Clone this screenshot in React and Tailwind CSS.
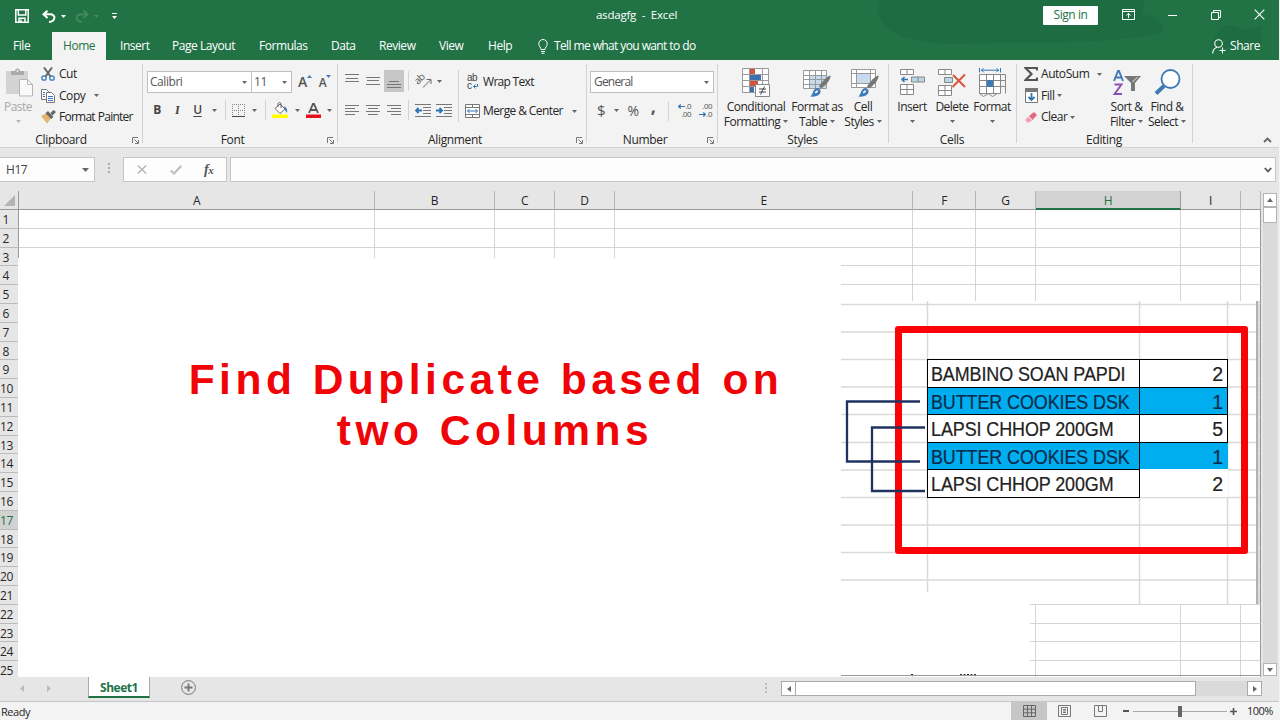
import React from 'react';

const tabs = [
  { name: 'File', cls: 'w-[52px] pl-[13px]' },
  { name: 'Home', cls: 'w-[54px] pl-[11px] bg-[#f3f3f3] text-[#217346]' },
  { name: 'Insert', cls: 'w-[53px] pl-[14px]' },
  { name: 'Page Layout', cls: 'w-[87px] pl-[13px]' },
  { name: 'Formulas', cls: 'w-[72px] pl-[13px]' },
  { name: 'Data', cls: 'w-[48px] pl-[13px]' },
  { name: 'Review', cls: 'w-[60px] pl-[13px]' },
  { name: 'View', cls: 'w-[49px] pl-[13px]' },
  { name: 'Help', cls: 'w-[49px] pl-[13px]' },
];

const columns = [
  { name: 'A', w: 'w-[356px]' },
  { name: 'B', w: 'w-[120px]' },
  { name: 'C', w: 'w-[60px]' },
  { name: 'D', w: 'w-[60px]' },
  { name: 'E', w: 'w-[298px]' },
  { name: 'F', w: 'w-[63px]' },
  { name: 'G', w: 'w-[60px]' },
  { name: 'H', w: 'w-[145px]' },
  { name: 'I', w: 'w-[60px]' },
  { name: '', w: 'w-[20px]' },
];

const rows = Array.from({ length: 25 }, (_, i) => i + 1);

const items = [
  { name: 'BAMBINO SOAN PAPDI', qty: 2 },
  { name: 'BUTTER COOKIES DSK', qty: 1, dup: true },
  { name: 'LAPSI CHHOP 200GM', qty: 5 },
  { name: 'BUTTER COOKIES DSK', qty: 1, dup: true, open: true },
  { name: 'LAPSI CHHOP 200GM', qty: 2, open: true },
];

function Caret({ className = 'text-[#666]' }) {
  return (
    <svg className={`w-[5px] h-[3px] shrink-0 ${className}`} viewBox="0 0 5 3" fill="currentColor">
      <path d="M0 0h5L2.5 3z" />
    </svg>
  );
}

function Slot({ w, className = '', children }) {
  return <div className={`flex shrink-0 items-center justify-center ${w} ${className}`}>{children}</div>;
}

function Sep({ className = 'h-[20px]' }) {
  return <div className={`w-px shrink-0 bg-[#d4d4d4] ${className}`} />;
}

function Launcher() {
  return (
    <svg className="absolute right-[4px] bottom-[4px] w-[7px] h-[7px]" viewBox="0 0 7 7" fill="none" stroke="#777">
      <path d="M.5 6V.5H6M2.5 2.5l3.5 3.5M6.5 3v3.5H3" />
    </svg>
  );
}

function Group({ w, label, launcher, children }) {
  return (
    <div className={`relative flex h-[86px] shrink-0 flex-col ${w}`}>
      <div className="flex h-[69px]">{children}</div>
      <div className="h-[17px] text-center leading-[17px] tracking-[-0.35px]">{label}</div>
      {launcher && <Launcher />}
      <div className="absolute right-0 top-[2px] h-[79px] w-px bg-[#d2d2d2]" />
    </div>
  );
}

function BigButton({ w, icon, top, bottom, dim }) {
  return (
    <div className={`flex shrink-0 flex-col items-center whitespace-nowrap tracking-[-0.5px] ${w} ${dim ? 'text-[#a9a9a9]' : ''}`}>
      <div className="flex h-[35px] items-end justify-center">{icon}</div>
      <div className="mt-[2px] h-[15px] leading-[15px]">{top}</div>
      <div className="flex h-[15px] items-center gap-[3px] leading-[15px]">
        {bottom}
        <Caret className={dim ? 'text-[#b5b5b5]' : 'text-[#666]'} />
      </div>
    </div>
  );
}

function AlignLines({ lines }) {
  return (
    <svg className="w-[14px] h-[14px]" viewBox="0 0 14 14" stroke="#777">
      {lines.map(([x, y, w]) => (
        <path key={y} d={`M${x} ${y}h${w}`} />
      ))}
    </svg>
  );
}

function TitleBar() {
  return (
    <div className="relative flex h-[32px] items-center text-white">
      <div className="flex w-[480px] items-center">
        <svg className="ml-[15px] w-[14px] h-[14px]" viewBox="0 0 14 14" fill="none" stroke="#fff" strokeWidth="1.5">
          <path d="M.8.8h12.4v12.4H.8zM3.3 1v5h7.5V1M4 13V9.2h6V13M6 10.5V13" />
        </svg>
        <svg className="ml-[13px] w-[14px] h-[13px]" viewBox="0 0 14 13" fill="none" stroke="#fff" strokeWidth="2">
          <path d="M5.5.8L1.5 4.3l4 3.6M1.8 4.3h6.4c6 0 5.6 7-1.2 7.8" />
        </svg>
        <Caret className="ml-[5px] text-white" />
        <svg className="ml-[9px] w-[14px] h-[13px]" viewBox="0 0 14 13" fill="none" stroke="#44895f" strokeWidth="1.8">
          <path d="M8.5.8l4 3.5-4 3.6M12.2 4.3H5.8c-6 0-5.6 7 1.2 7.8" />
        </svg>
        <Caret className="ml-[5px] text-[#44895f]" />
        <svg className="ml-[13px] w-[5px] h-[6px]" viewBox="0 0 5 6" fill="#fff">
          <path d="M0 0h5v1H0zM0 3h5L2.5 6z" />
        </svg>
      </div>
      <div className="-mt-[2px] w-[313px] text-center text-[11.5px] tracking-[-0.2px]">asdagfg&nbsp; -&nbsp; Excel</div>
      <div className="ml-[250px] mt-[-2px] h-[19px] w-[55px] rounded-[1px] bg-white text-center leading-[18px] text-[#217346]">Sign in</div>
      <svg className="ml-[24px] mt-[-3px] w-[13px] h-[11px]" viewBox="0 0 13 11" fill="none" stroke="#fff">
        <path d="M.5.5h12v10H.5zM.5 2.5h12M6.5 9V4.5M4.3 6.5l2.2-2.2 2.2 2.2" />
      </svg>
      <div className="ml-[33px] mt-[-2px] h-px w-[9px] bg-white" />
      <svg className="ml-[34px] mt-[-3px] w-[10px] h-[10px]" viewBox="0 0 10 10" fill="none" stroke="#fff">
        <path d="M.5 2.5h7v7h-7zM2.5 2.5v-2h7v7h-2" />
      </svg>
      <svg className="ml-[33px] mt-[-3px] w-[11px] h-[11px]" viewBox="0 0 11 11" stroke="#fff" strokeWidth="1.1">
        <path d="M.7.7l9.6 9.6M10.3.7L.7 10.3" />
      </svg>
    </div>
  );
}

function TabRow() {
  return (
    <div className="relative flex h-[28px] text-white">
      {tabs.map((t) => (
        <div key={t.name} className={`shrink-0 whitespace-nowrap leading-[28px] ${t.cls}`}>{t.name}</div>
      ))}
      <div className="flex w-[688px] items-center pl-[14px]">
        <svg className="w-[10px] h-[15px]" viewBox="0 0 10 15" fill="none" stroke="#fff">
          <path d="M3 10.5C3 8.5.8 7.5.8 4.7a4.2 4.2 0 0 1 8.4 0C9.2 7.5 7 8.5 7 10.5zM3 12.5h4M3.5 14.3h3" />
        </svg>
        <span className="ml-[6px] tracking-[-0.65px] [word-spacing:0.2px]">Tell me what you want to do</span>
      </div>
      <div className="flex items-center">
        <svg className="w-[14px] h-[15px]" viewBox="0 0 14 15" fill="none" stroke="#fff" strokeWidth="1.1">
          <circle cx="6.5" cy="4.5" r="3.8" />
          <path d="M.6 14.5c.3-3.7 2-5.5 4.4-6.3M7.500 11.500h6M10.500 8.500v6" />
        </svg>
        <span className="ml-[4px]">Share</span>
      </div>
    </div>
  );
}

function Clipboard() {
  return (
    <Group w="w-[143px]" label={<span className="mr-[21px]">Clipboard</span>} launcher>
      <BigButton
        w="w-[36px]"
        dim
        top="Paste"
        icon={
          <svg className="ml-[3px] w-[27px] h-[29px]" viewBox="0 0 27 29">
            <path d="M0 3h22v23H0z" fill="#d3d3d3" />
            <path d="M5 7V3h4a2.500 2.500 0 0 1 5 0h4v4z" fill="#aaa" />
            <circle cx="11.500" cy="3" r="1" fill="#eee" />
            <path d="M13.500 11.500h8l5 5v11.500h-13z" fill="#fafafa" stroke="#b5b5b5" />
            <path d="M21.500 11.500v5h5" fill="none" stroke="#b5b5b5" />
          </svg>
        }
      />
      <div className="ml-[5px] mt-[1px] flex flex-col">
        <div className="flex h-[22px] items-center">
          <svg className="w-[14px] h-[14px]" viewBox="0 0 14 14" fill="none">
            <path d="M3 .5l6.500 9M11 .5l-6.500 9" stroke="#666" strokeWidth="2" />
            <circle cx="3" cy="11" r="2.200" stroke="#3e7ab5" strokeWidth="1.300" />
            <circle cx="11" cy="11" r="2.200" stroke="#3e7ab5" strokeWidth="1.300" />
          </svg>
          <span className="ml-[4px]">Cut</span>
        </div>
        <div className="flex h-[21px] items-center">
          <svg className="w-[14px] h-[14px]" viewBox="0 0 14 14" fill="#fff" stroke="#777">
            <path d="M.5.5h5l2 2v8h-7z" />
            <path d="M5.500 3.500h5l3 3v7h-8z" />
            <path d="M2 3.500h2M2 5.500h2M2 7.500h2M7 7.500h5M7 9.500h5M7 11.500h5" stroke="#3e7ab5" />
          </svg>
          <span className="ml-[4px]">Copy</span>
          <Caret className="ml-[9px] text-[#666]" />
        </div>
        <div className="flex h-[22px] items-center">
          <svg className="w-[15px] h-[14px]" viewBox="0 0 15 14">
            <path d="M0 6l5-2.500 5 5L6 13.500z" fill="#e3b570" />
            <path d="M4.500 3.200L7 1l5.500 6-2.500 2zM9.500 3l3-3L15 2l-3.500 3.500z" fill="#666" />
          </svg>
          <span className="ml-[3px] whitespace-nowrap tracking-[-0.75px] [word-spacing:0.5px]">Format Painter</span>
        </div>
      </div>
    </Group>
  );
}

function FontGroup() {
  return (
    <Group w="w-[195px]" label={<span className="mr-[16px]">Font</span>} launcher>
      <div className="ml-[4px] flex flex-col">
        <div className="mt-[9px] flex h-[22px] items-center text-[#555]">
          <div className="flex h-[22px] w-[105px] items-center justify-between border border-[#c0c0c0] bg-white pl-[2px] pr-[4px]">
            Calibri <Caret />
          </div>
          <div className="-ml-px flex h-[22px] w-[41px] items-center justify-between border border-[#c0c0c0] bg-white pl-[2px] pr-[4px]">
            11 <Caret />
          </div>
          <div className="ml-[6px] flex items-center">
            <span className="text-[14px] font-semibold leading-none">A</span>
            <svg className="mb-[11px] w-[5px] h-[3px]" viewBox="0 0 5 3" fill="#3e7ab5"><path d="M0 3h5L2.500 0z" /></svg>
          </div>
          <div className="ml-[7px] flex items-center">
            <span className="mt-[2px] text-[12px] font-semibold leading-none">A</span>
            <svg className="mb-[11px] w-[5px] h-[3px]" viewBox="0 0 5 3" fill="#3e7ab5"><path d="M0 0h5L2.500 3z" /></svg>
          </div>
        </div>
        <div className="mt-[7px] flex h-[22px] items-center pb-[2px] text-[#444]">
          <Slot w="w-[20px]" className="font-bold">B</Slot>
          <Slot w="w-[20px]" className="font-serif font-bold italic">I</Slot>
          <Slot w="w-[21px]" className="font-semibold underline underline-offset-2">U</Slot>
          <Slot w="w-[12px]"><Caret /></Slot>
          <Slot w="w-[10px]"><Sep /></Slot>
          <Slot w="w-[17px]">
            <svg className="w-[13px] h-[13px]" viewBox="0 0 13 13" fill="none" stroke="#888">
              <path d="M.5 0v12M6.500 0v12M12.500 0v12M0 .5h13M0 6.500h13" strokeDasharray="1 1" />
              <path d="M0 12.500h13" stroke="#444" />
            </svg>
          </Slot>
          <Slot w="w-[15px]"><Caret /></Slot>
          <Slot w="w-[6px]"><Sep /></Slot>
          <Slot w="w-[24px]">
            <svg className="w-[16px] h-[16px]" viewBox="0 0 16 16">
              <path d="M3 6.500L8 2l5 5-5 4.500z" fill="#fff" stroke="#666" />
              <path d="M6 5V1.500Q7.500-.5 9 1.500V6" fill="none" stroke="#666" />
              <path d="M12 4q4 2 3 7l-2-3z" fill="#3e7ab5" />
              <path d="M0 12.500h16V16H0z" fill="#ffff00" />
            </svg>
          </Slot>
          <Slot w="w-[10px]"><Caret /></Slot>
          <Slot w="w-[22px]">
            <svg className="w-[15px] h-[16px]" viewBox="0 0 15 16">
              <path d="M3 11L7 2h1l4 9M4.500 8h6" fill="none" stroke="#555" strokeWidth="1.800" />
              <path d="M0 12.500h15V16H0z" fill="#e8101a" />
            </svg>
          </Slot>
          <Slot w="w-[10px]"><Caret /></Slot>
        </div>
      </div>
    </Group>
  );
}

function Indent({ out }) {
  return (
    <svg className="w-[16px] h-[13px]" viewBox="0 0 16 13" fill="none">
      <path d="M0 .5h16M8 3.500h8M8 6.500h8M8 9.500h8M0 12.500h16" stroke="#777" />
      <path d={out ? 'M1 6.500h6M3.500 4L1 6.500 3.500 9' : 'M0 6.500h6M3.500 4L6 6.500 3.500 9'} stroke="#2f74b5" strokeWidth="1.800" />
    </svg>
  );
}

function Alignment() {
  return (
    <Group w="w-[249px]" label={<span className="mr-[15px]">Alignment</span>} launcher>
      <div className="ml-[4px] flex w-[116px] flex-col">
        <div className="mt-[8px] flex h-[22px] items-center">
          <Slot w="w-[20px]"><AlignLines lines={[[0, 0.5, 14], [1, 4.5, 12], [0, 7.5, 14]]} /></Slot>
          <Slot w="w-[22px]"><AlignLines lines={[[0, 3.5, 14], [1, 6.5, 12], [0, 10.5, 14]]} /></Slot>
          <Slot w="w-[20px]" className="h-[22px] bg-[#c6c6c6]"><AlignLines lines={[[2, 7.5, 10], [0, 10.5, 14], [0, 13.5, 14]]} /></Slot>
          <Slot w="w-[9px]"><Sep /></Slot>
          <Slot w="w-[22px]">
            <svg className="w-[18px] h-[16px]" viewBox="0 0 18 16" fill="none" stroke="#666">
              <text x="3" y="12" fontSize="10" fill="#555" stroke="none" transform="rotate(-45 3 12)">ab</text>
              <path d="M8 14.500l7.500-7.500M11.500 6.500h4.500V11" />
            </svg>
          </Slot>
          <Slot w="w-[8px]"><Caret /></Slot>
        </div>
        <div className="mt-[7px] flex h-[22px] items-center">
          <Slot w="w-[20px]"><AlignLines lines={[[0, 2.5, 14], [0, 5.5, 10], [0, 8.5, 14], [0, 11.5, 10]]} /></Slot>
          <Slot w="w-[22px]"><AlignLines lines={[[0, 2.5, 14], [2, 5.5, 10], [0, 8.5, 14], [2, 11.5, 10]]} /></Slot>
          <Slot w="w-[20px]"><AlignLines lines={[[0, 2.5, 14], [4, 5.5, 10], [0, 8.5, 14], [4, 11.5, 10]]} /></Slot>
          <Slot w="w-[9px]"><Sep /></Slot>
          <Slot w="w-[20px]"><Indent out /></Slot>
          <Slot w="w-[22px]"><Indent /></Slot>
        </div>
      </div>
      <Sep className="mt-[8px] h-[52px]" />
      <div className="flex flex-col">
        <div className="mt-[9px] flex h-[22px] items-center">
          <div className="ml-[8px] flex w-[12px] flex-col font-['Liberation_Sans'] text-[10px] leading-[8px] text-[#444]">
            <span>ab</span>
            <span className="flex">c
              <svg className="ml-[1px] mt-[2px] w-[5px] h-[5px]" viewBox="0 0 5 5" fill="none" stroke="#2f74b5"><path d="M4.500 0v2.500H.5M2.500.5l-2 2 2 2" /></svg>
            </span>
          </div>
          <span className="ml-[4px] tracking-[-0.7px]">Wrap Text</span>
        </div>
        <div className="mt-[7px] flex h-[22px] items-center">
          <svg className="ml-[6px] w-[15px] h-[14px]" viewBox="0 0 15 14" fill="#fff" stroke="#777">
            <path d="M.5.5h14v13H.5zM.5 3.500h14M.5 10.500h14M7.500.5v3M7.500 10.500v3" />
            <path d="M2.500 7h10M4.500 5l-2 2 2 2M10.500 5l2 2-2 2" fill="none" stroke="#2f74b5" />
          </svg>
          <span className="ml-[3px] w-[82px] whitespace-nowrap tracking-[-0.6px]">Merge &amp; Center</span>
          <Caret className="ml-[7px] text-[#666]" />
        </div>
      </div>
    </Group>
  );
}

function NumberGroup() {
  return (
    <Group w="w-[131px]" label={<span className="mr-[15px]">Number</span>} launcher>
      <div className="ml-[3px] flex flex-col">
        <div className="mt-[9px] flex h-[22px] w-[124px] items-center justify-between border border-[#c0c0c0] bg-white pl-[3px] pr-[4px] tracking-[-0.8px] text-[#555]">
          General <Caret />
        </div>
        <div className="mt-[7px] flex h-[22px] items-center pb-px text-[#555]">
          <Slot w="w-[22px]" className="text-[15px]">$</Slot>
          <Slot w="w-[9px]"><Caret /></Slot>
          <Slot w="w-[24px]" className="text-[14px]">%</Slot>
          <Slot w="w-[16px]" className="pb-[8px] text-[18px] font-bold">,</Slot>
          <Slot w="w-[14px]"><Sep /></Slot>
          <div className="flex w-[16px] flex-col items-end font-['Liberation_Sans'] text-[8px] leading-[8px]">
            <span className="flex items-center">
              <svg className="w-[7px] h-[5px]" viewBox="0 0 7 5" fill="none" stroke="#2f74b5" strokeWidth="1.200"><path d="M.7 2.500H7M2.700.5l-2 2 2 2" /></svg>.0
            </span>
            <span>.00</span>
          </div>
          <div className="ml-[5px] flex w-[16px] flex-col items-end font-['Liberation_Sans'] text-[8px] leading-[8px]">
            <span>.00</span>
            <span className="flex items-center">
              <svg className="w-[7px] h-[5px]" viewBox="0 0 7 5" fill="none" stroke="#2f74b5" strokeWidth="1.200"><path d="M0 2.500h6.300M4.300.5l2 2-2 2" /></svg>.0
            </span>
          </div>
        </div>
      </div>
    </Group>
  );
}

function Brush() {
  return (
    <g>
      <path d="M27.500 6.500c.8 3-4 9.500-9.500 13l-2-2c3-5 8-10.500 11.500-11z" fill="#777" />
      <path d="M7 27.500c3-1 2.500-7.500 7-8.500 3 0 4.500 3 3 5.500-2 3-7 3.500-10 3z" fill="#3e7ab5" />
      <path d="M12 23.500q2 0 2.500-2" stroke="#fff" strokeWidth="1.500" fill="none" />
    </g>
  );
}

function Styles() {
  return (
    <Group w="w-[171px]" label={<span className="mr-[2px]">Styles</span>}>
      <BigButton
        w="w-[76px]"
        top="Conditional"
        bottom="Formatting"
        icon={
          <svg className="w-[28px] h-[29px]" viewBox="0 0 28 29">
            <path d="M.5.5h26v24H.5zM.5 6.500h26M.5 12.500h26M.5 18.500h26M7.500.5v24M20.500.5v24" fill="#fff" stroke="#999" />
            <path d="M8 1h5v5H8zM8 13h8v5H8z" fill="#d3523b" />
            <path d="M8 7h11v5H8zM8 19h4v5H8z" fill="#3e6fae" />
            <path d="M13.500 16.500h14v12h-14z" fill="#fff" stroke="#888" />
            <path d="M17 21h7M17 24h7M22.500 18.500l-4 8" stroke="#444" />
          </svg>
        }
      />
      <BigButton
        w="w-[46px]"
        top="Format as"
        bottom="Table"
        icon={
          <svg className="w-[28px] h-[28px]" viewBox="0 0 28 28">
            <path d="M.5 1.500h23v18H.5z" fill="#fff" />
            <path d="M7 7h16v12H7z" fill="#c7dbee" />
            <path d="M.5 1.500h23v18H.5zM.5 6.500h23M.5 10.500h23M.5 15.500h23M6.500 1.500v18M12.500 1.500v18M18.500 1.500v18" fill="none" stroke="#999" />
            <Brush />
          </svg>
        }
      />
      <BigButton
        w="w-[46px]"
        top="Cell"
        bottom="Styles"
        icon={
          <svg className="ml-[4px] w-[28px] h-[28px]" viewBox="0 0 28 28">
            <path d="M.5.5h24v18H.5z" fill="#fff" />
            <path d="M6 5h13v9H6z" fill="#c7dbee" />
            <path d="M.5.5h24v18H.5zM.5 4.500h24M.5 14.500h24M5.500.5v18M19.500.5v18" fill="none" stroke="#999" />
            <Brush />
          </svg>
        }
      />
    </Group>
  );
}

function Cells() {
  return (
    <Group w="w-[128px]" label={<span className="mr-[2px]">Cells</span>}>
      <BigButton
        w="w-[46px]"
        top="Insert"
        icon={
          <svg className="mb-[2px] w-[25px] h-[26px]" viewBox="0 0 25 26" fill="#fff" stroke="#888">
            <path d="M.5.5h13v5H.5zM7 .5v5M.5 15.500h13v10H.5zM.5 20.500h13M7 15.500v10" />
            <path d="M11.500 8h13v5h-13zM18 8v5" fill="#b9d5e8" />
            <path d="M2 10.500h6M4.500 8L2 10.500 4.500 13" fill="none" stroke="#2f74b5" strokeWidth="1.600" />
          </svg>
        }
      />
      <BigButton
        w="w-[34px]"
        top="Delete"
        icon={
          <svg className="mb-[1px] w-[28px] h-[27px]" viewBox="0 0 28 27" fill="#fff" stroke="#888">
            <path d="M.5.5h13v5H.5zM7 .5v5M.5 16.500h13v10H.5zM.5 21.500h13M7 16.500v10" />
            <path d="M6.500 8.500h8v5h-8z" fill="#b9d5e8" />
            <path d="M15 6l12 12M27 5.500L14.500 18" fill="none" stroke="#d9553d" strokeWidth="2" />
          </svg>
        }
      />
      <BigButton
        w="w-[46px]"
        top="Format"
        icon={
          <svg className="w-[27px] h-[29px]" viewBox="0 0 27 29" fill="#fff" stroke="#888">
            <path d="M.5 6.500h21v19H.5z" />
            <path d="M.5 12.500h26M.5 18.500h26M7.500 6.500v19M14.500 6.500v19M20.500 6.500h6v19M.5 25.500l4 3 5-3 4 3 5-3" fill="none" />
            <path d="M8 12h6v7H8z" fill="#3e7ab5" stroke="none" />
            <path d="M.5 0v4.500M21.500 0v4.500M2 2.200h18M4.500.2l-2 2 2 2M17.500.2l2 2-2 2" fill="none" stroke="#2f74b5" />
          </svg>
        }
      />
    </Group>
  );
}

function Editing() {
  return (
    <Group w="w-[176px]" label={<span className="mr-[2px]">Editing</span>}>
      <div className="ml-[7px] mt-[1px] flex w-[82px] flex-col">
        <div className="flex h-[22px] items-center">
          <svg className="w-[14px] h-[14px]" viewBox="0 0 14 14" fill="none" stroke="#555" strokeWidth="2.200">
            <path d="M13 3.500V1H1.500l6 6-6 6H13v-2.500" />
          </svg>
          <span className="ml-[3px] w-[50px]">AutoSum</span>
          <Caret className="ml-[6px] text-[#666]" />
        </div>
        <div className="flex h-[21px] items-center">
          <svg className="ml-[1px] w-[13px] h-[15px]" viewBox="0 0 13 15">
            <path d="M.5.5h12v14H.5z" fill="#fff" stroke="#777" />
            <path d="M0 0h13v4H0z" fill="#777" />
            <path d="M6.500 5v7M3.500 9l3 3 3-3" fill="none" stroke="#2f74b5" strokeWidth="1.800" />
          </svg>
          <span className="ml-[3px]">Fill</span>
          <Caret className="ml-[3px] text-[#666]" />
        </div>
        <div className="flex h-[22px] items-center">
          <svg className="ml-[1px] w-[12px] h-[11px]" viewBox="0 0 12 11">
            <path d="M4 4l5-4 3 3-4.500 5z" fill="#e4677b" />
            <path d="M3.300 4.700L0 8l3 3 4-2.500z" fill="#f0a3ae" />
          </svg>
          <span className="ml-[4px] tracking-[-0.5px]">Clear</span>
          <Caret className="ml-[3px] text-[#666]" />
        </div>
      </div>
      <BigButton
        w="w-[41px]"
        top="Sort &amp;"
        bottom="Filter"
        icon={
          <svg className="mb-[1px] w-[28px] h-[27px]" viewBox="0 0 28 27" fill="none">
            <path d="M1 12L5 2h1l4 10M2.500 8.500h6" stroke="#3e7ab5" strokeWidth="1.900" />
            <path d="M1.500 15.500h7l-7 9.500h7.500" stroke="#8a4fb5" strokeWidth="1.900" />
            <path d="M11 7h17l-6 7v8h-4v-8z" fill="#777" />
            <path d="M19.500 13l5-5" stroke="#eee" strokeWidth="1" />
          </svg>
        }
      />
      <BigButton
        w="w-[40px]"
        top="Find &amp;"
        bottom="Select"
        icon={
          <svg className="mb-[2px] w-[27px] h-[26px]" viewBox="0 0 27 26" fill="none" stroke="#3e7ab5">
            <circle cx="16.500" cy="10" r="9" fill="#fff" strokeWidth="1.800" />
            <path d="M10 17l-8 7.500" strokeWidth="4" />
          </svg>
        }
      />
    </Group>
  );
}

function Ribbon() {
  return (
    <div className="flex h-[88px] shrink-0 border-b border-[#d2d2d2] bg-[#f3f3f3] pt-[2px]">
      <Clipboard />
      <FontGroup />
      <Alignment />
      <NumberGroup />
      <Styles />
      <Cells />
      <Editing />
      <svg className="ml-[70px] mt-[75px] w-[9px] h-[6px]" viewBox="0 0 9 6" fill="none" stroke="#666" strokeWidth="1.800">
        <path d="M1 5l3.500-3.500L8 5" />
      </svg>
    </div>
  );
}

function FormulaBar() {
  return (
    <div className="flex h-[43px] shrink-0 items-start pt-[9px]">
      <div className="flex h-[25px] w-[95px] items-center justify-between border border-l-0 border-[#c6c6c6] bg-[#fdfdfd] pl-[6px] pr-[5px] text-[#444]">
        H17
        <svg className="w-[7px] h-[4px]" viewBox="0 0 7 4" fill="#666"><path d="M0 0h7L3.500 4z" /></svg>
      </div>
      <div className="ml-[13px] mt-[6px] flex flex-col gap-[2px]">
        <i className="h-[2px] w-[2px] bg-[#aaa]" />
        <i className="h-[2px] w-[2px] bg-[#aaa]" />
        <i className="h-[2px] w-[2px] bg-[#aaa]" />
      </div>
      <div className="ml-[13px] flex h-[25px] w-[104px] items-center border border-[#c6c6c6] bg-[#fdfdfd]">
        <svg className="ml-[13px] w-[10px] h-[9px]" viewBox="0 0 10 9" stroke="#bbb" strokeWidth="1.600"><path d="M.8.5l8.400 8M9.200.5L.8 8.500" /></svg>
        <svg className="ml-[23px] w-[12px] h-[10px]" viewBox="0 0 12 10" fill="none" stroke="#c0c0c0" strokeWidth="2.200"><path d="M.8 5.500L4 8.500 11.300.8" /></svg>
        <span className="ml-[22px] font-['Liberation_Serif'] text-[14px] font-bold italic text-[#555]">f<span className="text-[11px]">x</span></span>
      </div>
      <div className="ml-[3px] flex h-[25px] w-[1046px] items-center justify-end border border-[#c6c6c6] bg-[#fdfdfd] pr-[3px]">
        <svg className="w-[8px] h-[6px]" viewBox="0 0 8 6" fill="none" stroke="#555" strokeWidth="1.800"><path d="M.8 1L4 4.500 7.200 1" /></svg>
      </div>
    </div>
  );
}

// red frame, item table and the connector lines between duplicates
function DuplicatePanel() {
  return (
    <div className="absolute left-[841px] top-[110px] h-[303px] w-[419px] overflow-hidden bg-white">
      <svg className="absolute left-0 top-0" width="419" height="303" fill="none" stroke="#d9d9d9" strokeWidth="1.500">
        {[3.5, 31, 58.5, 86, 113.5, 141.5, 169, 196.5, 224, 251.5, 279].map((y) => (
          <path key={y} d={`M0 ${y}h416`} />
        ))}
        <path d="M86.500 0v291M298.500 0v303M386.500 0v303" />
        <path d="M416 0v303" stroke="#999" />
        <path d="M418 0v303" stroke="#dcdcdc" strokeWidth="2" />
      </svg>
      <div className="absolute left-[54px] top-[25px] h-[228px] w-[353px] rounded-[3px] border-[7px] border-[#fb0207]" />
      <div className="absolute left-[86px] top-[58px] flex w-[301px] flex-col font-['Liberation_Sans'] text-[19.5px] tracking-[-0.1px] text-[#222]">
        {items.map((it, i) => (
          <div key={i} className={`flex h-[27.6px] leading-[29.6px] ${it.dup ? 'bg-[#00adef] text-[#0b2c4a]' : 'bg-white'}`}>
            <div className="w-[213px] shrink-0 border-x border-t border-black pl-[3px]">
              <span className="inline-block origin-left scale-x-[0.92] whitespace-nowrap [-webkit-text-stroke:0.2px]">{it.name}</span>
            </div>
            <div className={`flex-1 text-right [-webkit-text-stroke:0.2px] ${it.open ? 'pr-[5px]' : 'border-r border-t border-black pr-[4px]'} ${i === 3 ? 'border-t border-black' : ''} ${i === 4 ? 'pt-px' : ''}`}>{it.qty}</div>
          </div>
        ))}
        <div className="h-px w-[213px] bg-black" />
      </div>
      <svg className="absolute left-0 top-0" width="100" height="303" fill="none" stroke="#1f3361" strokeWidth="2.300">
        <path d="M79 100.500H6v60h73M84 126.500H31v63.500h53" />
      </svg>
    </div>
  );
}

function Sheet() {
  return (
    <div className="relative flex h-[486px] shrink-0 overflow-hidden">
      <div className="flex w-[1261px] flex-col">
        <div className="flex h-[19px] shrink-0 border-b border-[#999]">
          <div className="flex w-[19px] items-end justify-end border-r border-[#999] pb-[3px] pr-[3px]">
            <svg className="w-[11px] h-[11px]" viewBox="0 0 11 11" fill="#b4b4b4"><path d="M11 0v11H0z" /></svg>
          </div>
          {columns.map((c) => (
            <div
              key={c.name}
              className={`h-[19px] shrink-0 border-r text-center leading-[19px] ${c.w} ${c.name === 'H' ? 'border-b-2 border-b-[#217346] border-r-[#999] bg-[#d2d2d2] text-[#217346]' : 'border-[#b4b4b4]'}`}
            >
              {c.name}
            </div>
          ))}
        </div>
        {rows.map((r) => (
          <div key={r} className="flex h-[18.8px] shrink-0">
            <div className={`w-[19px] shrink-0 border-b border-r border-b-[#bbb] text-right leading-[20px] ${r === 17 ? 'border-r-[#217346] bg-[#d2d2d2] text-[#217346]' : 'border-r-[#999]'} ${r > 9 ? 'pr-[5px] tracking-[-0.4px]' : 'pr-[9px]'}`}>{r}</div>
            {columns.map((c) => (
              <div key={c.name} className={`shrink-0 border-b border-r border-[#d4d4d4] bg-white ${c.w} ${c.name ? '' : 'border-r-[#999]'}`} />
            ))}
          </div>
        ))}
      </div>
      <div className="flex w-[18px] flex-col items-center pt-[2px]">
        <div className="flex h-[14px] w-[14px] items-center justify-center border border-[#b4b4b4] bg-white">
          <svg className="w-[6px] h-[4px]" viewBox="0 0 6 4" fill="#666"><path d="M0 4h6L3 0z" /></svg>
        </div>
        <div className="h-[16px] w-[14px] border border-[#b4b4b4] bg-white" />
        <div className="w-[14px] flex-1 bg-[#dadada]" />
        <div className="mb-px flex h-[13px] w-[14px] items-center justify-center border border-[#b4b4b4] bg-white">
          <svg className="w-[6px] h-[4px]" viewBox="0 0 6 4" fill="#666"><path d="M0 0h6L3 4z" /></svg>
        </div>
      </div>

      <div className="absolute bottom-[2px] left-[841px] h-[71px] w-[189px] bg-white" />
      {/* bottom edge of the sheet, with tips of covered text poking out */}
      <svg className="absolute bottom-[1px] left-[841px]" width="420" height="2">
        <path d="M0 1.500h420" stroke="#999" />
        <path d="M70 .5h2M119 .5h16" stroke="#333" strokeDasharray="2 1.500" />
      </svg>
      <div className="absolute left-[18px] top-[67px] h-[419px] w-[823px] bg-white">
        <div className="mt-[96px] w-[823px] text-center font-['Liberation_Sans'] text-[42.5px] font-bold leading-[51px] tracking-[4.500px] text-[#f00408]">
          <div className="ml-[118px] mr-[5px] whitespace-nowrap">Find Duplicate based on</div>
          <div className="ml-[133px] mr-[2px] whitespace-nowrap">two Columns</div>
        </div>
      </div>
      <DuplicatePanel />
    </div>
  );
}

function SheetTabs() {
  return (
    <div className="flex h-[24px] shrink-0 items-start">
      <svg className="ml-[20px] mt-[8px] w-[4px] h-[7px]" viewBox="0 0 4 7" fill="#bbb"><path d="M4 0v7L0 3.500z" /></svg>
      <svg className="ml-[23px] mt-[8px] w-[4px] h-[7px]" viewBox="0 0 4 7" fill="#bbb"><path d="M0 0v7l4-3.500z" /></svg>
      <div className="ml-[37px] h-[21px] w-[62px] border-x border-b-2 border-x-[#aaa] border-b-[#217346] bg-white text-center font-bold leading-[21px] text-[#217346]">Sheet1</div>
      <svg className="ml-[31px] mt-[3px] w-[15px] h-[15px]" viewBox="0 0 15 15" fill="none" stroke="#777">
        <circle cx="7.500" cy="7.500" r="6.900" />
        <path d="M3.500 7.500h8M7.500 3.500v8" strokeWidth="1.800" />
      </svg>
      <div className="ml-[569px] mt-[6px] flex flex-col gap-[2px]">
        <i className="h-[2px] w-[2px] bg-[#bbb]" />
        <i className="h-[2px] w-[2px] bg-[#bbb]" />
        <i className="h-[2px] w-[2px] bg-[#bbb]" />
      </div>
      <div className="ml-[14px] mt-[4px] flex h-[15px] w-[481px] bg-[#dadada]">
        <div className="flex w-[15px] items-center justify-center border border-[#aaa] bg-white">
          <svg className="w-[4px] h-[6px]" viewBox="0 0 4 6" fill="#666"><path d="M4 0v6L0 3z" /></svg>
        </div>
        <div className="-ml-px w-[401px] border border-[#aaa] bg-white" />
        <div className="ml-auto flex w-[15px] items-center justify-center border border-[#aaa] bg-white">
          <svg className="w-[4px] h-[6px]" viewBox="0 0 4 6" fill="#666"><path d="M0 0v6l4-3z" /></svg>
        </div>
      </div>
    </div>
  );
}

function StatusBar() {
  return (
    <div className="flex h-[19px] shrink-0 items-center border-t border-[#c6c6c6] bg-[#f3f3f3] text-[11px]">
      <div className="w-[1011px] pl-[1px] pt-[2px] leading-[16px]">Ready</div>
      <div className="flex h-[18px] w-[36px] items-center justify-center bg-[#c6c6c6]">
        <svg className="w-[13px] h-[12px]" viewBox="0 0 13 12" fill="none" stroke="#666"><path d="M.5.5h12v11H.5zM.5 4.200h12M.5 7.800h12M4.500.5v11M8.500.5v11" /></svg>
      </div>
      <svg className="ml-[11px] w-[13px] h-[12px]" viewBox="0 0 13 12" fill="none" stroke="#777"><path d="M.5.5h12v11H.5zM3.500 2.500h6v7h-6zM5 4.500h3M5 6h3M5 7.500h3" /></svg>
      <svg className="ml-[23px] w-[13px] h-[12px]" viewBox="0 0 13 12" fill="none" stroke="#777"><path d="M.5.5h12v11H.5zM4.500.5v6h4M8.500.5v6" /></svg>
      <div className="ml-[16px] h-[2px] w-[6px] bg-[#555]" />
      <div className="ml-[4px] flex h-[12px] w-[94px] items-center">
        <div className="h-px w-[45px] bg-[#aaa]" />
        <div className="h-[11px] w-[4px] bg-[#666]" />
        <div className="h-px flex-1 bg-[#aaa]" />
      </div>
      <svg className="ml-[3px] w-[7px] h-[7px]" viewBox="0 0 7 7" stroke="#555" strokeWidth="1.600"><path d="M0 3.500h7M3.500 0v7" /></svg>
      <span className="ml-[10px] tracking-[-0.5px]">100%</span>
    </div>
  );
}

export default function App() {
  return (
    <div className="flex h-[720px] w-[1280px] flex-col overflow-hidden border-r border-[#f3f3f3] bg-[#e6e6e6] font-['Open_Sans',sans-serif] text-[12px] tracking-[-0.45px] text-[#262626]">
      <div className="relative h-[60px] shrink-0 bg-[#217346]">
        {/* faint pattern on the right of the title bar */}
        <svg className="absolute right-0 top-0" width="460" height="60" fill="#1c653c">
          <path d="M60 0h265l-2 14q20 4 22 14l-6 6q-60 10-120 8L130 44Q50 40 60 0z" opacity=".5" />
          <path d="M400 30q10-10 22 0l20-4v22h-52z" opacity=".5" />
        </svg>
        <TitleBar />
        <TabRow />
      </div>
      <Ribbon />
      <FormulaBar />
      <Sheet />
      <SheetTabs />
      <StatusBar />
    </div>
  );
}
